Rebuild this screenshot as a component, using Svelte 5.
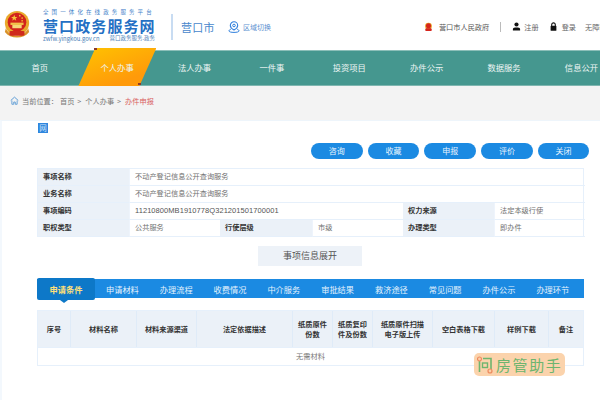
<script>
  const nav = ['首页', '个人办事', '法人办事', '一件事', '投资项目', '办件公示', '数据服务', '信息公开'];
  const actions = ['咨询', '收藏', '申报', '评价', '关闭'];
  const tabs = ['申请材料', '办理流程', '收费情况', '中介服务', '审批结果', '救济途径', '常见问题', '办件公示', '办理环节'];
  const cols = [
    ['序号', 33], ['材料名称', 66], ['材料来源渠道', 60], ['法定依据描述', 96],
    ['纸质原件\n份数', 40], ['纸质复印\n件及份数', 40], ['纸质原件扫描\n电子版上传', 60],
    ['空白表格下载', 62], ['样例下载', 54], ['备注', 34]
  ];
</script>

<div class="page">
  <header class="top">
    <svg class="emblem" viewBox="0 0 30 30" aria-hidden="true">
      <circle cx="15" cy="13.500" r="13" fill="#e9a92c" />
      <circle cx="15" cy="12.500" r="10" fill="#d2231c" />
      <path d="M12 4.500l1 2.400 2.400.1-1.900 1.500.7 2.400-2.200-1.400-2 1.400.6-2.400L8.700 7l2.400-.1z" fill="#f5c63a" />
      <circle cx="18" cy="5.500" r=".9" fill="#f5c63a" />
      <circle cx="20.500" cy="8" r=".9" fill="#f5c63a" />
      <circle cx="20.500" cy="11" r=".9" fill="#f5c63a" />
      <rect x="8" y="13" width="14" height="2.500" fill="#f2c14a" />
      <rect x="10" y="15.500" width="10" height="3.500" fill="#f6d679" />
      <path d="M3 19c3 6 7 8 12 8s9-2 12-8l1 4c-3 4-8 6-13 6S5 27 2 23z" fill="#d9932a" />
      <rect x="7" y="22" width="16" height="5" rx="1.500" fill="#cf2a1d" />
    </svg>
    <div class="brand">
      <div class="slogan">全国一体化在线政务服务平台</div>
      <div class="title">营口政务服务网</div>
      <div class="sub"><span class="url">zwfw.yingkou.gov.cn</span><span>营口政务服务.政务</span></div>
    </div>
    <div class="divider"></div>
    <div class="city">营口市</div>
    <svg class="pin" viewBox="0 0 12 12" aria-hidden="true">
      <path d="M6 .8a3.700 3.700 0 0 1 3.700 3.700C9.700 7 6 9 6 9S2.300 7 2.300 4.500A3.700 3.700 0 0 1 6 .8z" fill="none" stroke="#2f7fdc" stroke-width="1.100" />
      <circle cx="6" cy="4.500" r="1.300" fill="none" stroke="#2f7fdc" stroke-width="1" />
      <path d="M2.800 8.200C1.500 8.700 1 9.300 1 9.900c0 1 2.200 1.500 5 1.500s5-.5 5-1.500c0-.6-.5-1.200-1.800-1.700" fill="none" stroke="#2f7fdc" stroke-width="1" />
    </svg>
    <div class="switch">区域切换</div>
    <div class="links">
      <svg class="mini" viewBox="0 0 10 10" aria-hidden="true">
        <circle cx="5" cy="4" r="3.800" fill="#e8a92c" />
        <circle cx="5" cy="3.700" r="2.800" fill="#d6251d" />
        <rect x="1.500" y="6.500" width="7" height="3" rx="1" fill="#d6251d" />
      </svg>
      <span class="gov">营口市人民政府</span>
      <i class="sep"></i>
      <svg class="glyph" viewBox="0 0 10 10" aria-hidden="true">
        <circle cx="5" cy="2.800" r="2.300" fill="#111" />
        <path d="M1 9.500V7.800C1 6.500 3 6 5 6s4 .5 4 1.800v1.700z" fill="#111" />
      </svg>
      <span class="reg">注册</span>
      <svg class="glyph lock" viewBox="0 0 10 10" aria-hidden="true">
        <path d="M3 4.500V3a2 2 0 0 1 4 0v1.500" fill="none" stroke="#111" stroke-width="1.200" />
        <rect x="1.800" y="4.300" width="6.400" height="5.400" rx=".6" fill="#111" />
      </svg>
      <span class="login">登录</span>
      <span class="access">无障碍</span>
    </div>
  </header>

  <nav class="nav">
    {#each nav as item, i}
      <div class="nav-item" class:active={i === 1}><span>{item}</span></div>
    {/each}
  </nav>

  <div class="crumbs">
    <svg class="home" viewBox="0 0 12 12" aria-hidden="true">
      <path d="M1 6l5-4.500L11 6" fill="none" stroke="#5b9bd5" stroke-width="1.300" />
      <path d="M2.500 6v5h2.500V8h2v3h2.500V6" fill="none" stroke="#5b9bd5" stroke-width="1.200" />
    </svg>
    <span class="here">当前位置：</span>
    <span>首页</span><b>&gt;</b><span>个人办事</span><b>&gt;</b><span class="now">办件申报</span>
  </div>

  <main class="main">
    <div class="net">网</div>
    <div class="actions">
      {#each actions as a}<button>{a}</button>{/each}
    </div>

    <div class="info">
      <div class="l">事项名称</div><div class="v wide">不动产登记信息公开查询服务</div>
      <div class="l">业务名称</div><div class="v wide">不动产登记信息公开查询服务</div>
      <div class="l">事项编码</div><div class="v mid code">11210800MB1910778Q321201501700001</div><div class="l">权力来源</div><div class="v">法定本级行使</div>
      <div class="l">职权类型</div><div class="v">公共服务</div><div class="l">行使层级</div><div class="v">市级</div><div class="l">办理类型</div><div class="v">即办件</div>
    </div>

    <div class="expand-row"><div class="expand">事项信息展开</div></div>

    <div class="tabs">
      <div class="tab-active">申请条件</div>
      {#each tabs as t}<div class="tab">{t}</div>{/each}
    </div>

    <div class="grid">
      <div class="head">
        {#each cols as [c, w]}<div class="th" style="width:{w}px">{c}</div>{/each}
      </div>
      <div class="empty">无需材料</div>
      <div class="mark">
        <svg class="q" viewBox="0 0 16 18" aria-hidden="true">
          <path d="M2.500 3v13M6 2.500h8v13.500h-2" fill="none" stroke="#6fb56e" stroke-width="1.600" />
          <rect x="5.500" y="7" width="5" height="4.500" fill="none" stroke="#6fb56e" stroke-width="1.400" />
          <circle cx="2.500" cy="3" r="2" fill="#fbd0a8" stroke="#ef8a5e" stroke-width="1.200" />
          <circle cx="13" cy="15" r="2" fill="#fbd0a8" stroke="#ef8a5e" stroke-width="1.200" />
        </svg>
        <span>房管助手</span>
      </div>
    </div>
  </main>
</div>

<style>
  :global(body) {
    margin: 0;
    background: #fff;
    overflow: hidden;
  }
  .page {
    width: 600px;
    height: 400px;
    overflow: hidden;
    font-family: "Noto Sans CJK SC", "Liberation Sans", sans-serif;
    font-size: 8px;
    color: #555;
  }

  .top {
    height: 50px;
    display: flex;
    align-items: center;
    box-sizing: border-box;
    padding: 0 0 0 3px;
    white-space: nowrap;
  }
  .emblem { width: 28px; height: 29px; flex: none; margin-bottom: 2px; }
  .brand { margin-left: 12px; width: 112px; color: #2a6fc4; }
  .slogan { font-size: 5.500px; letter-spacing: 3.100px; line-height: 9px; color: #3f7fc9; }
  .title { font-size: 15px; font-weight: 700; letter-spacing: 1.100px; line-height: 17px; color: #2470c4; }
  .sub { display: flex; justify-content: space-between; font-size: 5.500px; line-height: 9px; color: #4d7fb8; }
  .url { font-size: 5.900px; }
  .divider { width: 2px; height: 26px; background: #c8dcf2; margin: 4px 0 0 16px; flex: none; }
  .city { font-size: 11px; margin: 3px 0 0 8px; letter-spacing: .3px; color: #4787cc; }
  .pin { width: 12px; height: 12px; margin: 3px 0 0 13px; flex: none; }
  .switch { font-size: 7px; margin: 3px 0 0 3px; color: #5b8fd0; }
  .links { display: flex; align-items: center; margin-left: 153px; font-size: 7.200px; color: #666; padding-top: 3px; }
  .mini { width: 9px; height: 10px; flex: none; }
  .gov { margin-left: 6px; color: #555; }
  .sep { width: 1px; height: 10px; background: #bbb; margin: 0 11px; flex: none; }
  .glyph { width: 9px; height: 9px; flex: none; }
  .reg { margin-left: 3px; }
  .lock { margin-left: 10px; }
  .login { margin-left: 4px; }
  .access { margin-left: 9px; }

  .nav {
    height: 36px;
    box-sizing: border-box;
    border-top: 1px solid #8cbfb9;
    border-bottom: 1px solid #7fb6b0;
    background: #45978f;
    display: flex;
    padding-left: 1px;
    position: relative;
  }
  .nav-item {
    flex: none;
    width: 77.400px;
    display: flex;
    align-items: center;
    justify-content: center;
    box-sizing: border-box;
    padding-bottom: 2px;
    color: #eef6f5;
    font-size: 8.300px;
    position: relative;
  }
  .nav-item span { position: relative; z-index: 1; }
  .nav-item.active::before {
    content: "";
    position: absolute;
    left: 0;
    top: -3px;
    bottom: -1px;
    width: 78px;
    background: linear-gradient(160deg, #ffc400, #ff9a0a 75%);
    clip-path: polygon(17px 0, 100% 0, 61px 100%, 0 100%);
  }
  .nav-item.active::after {
    content: "";
    position: absolute;
    left: 16px;
    top: -3px;
    width: 61px;
    height: 37px;
    background:
      linear-gradient(#8c3a2a, #8c3a2a) 0 0 / 3px 2px no-repeat,
      linear-gradient(#8c3a2a, #8c3a2a) 44px 35px / 3px 2px no-repeat;
  }

  .crumbs {
    height: 34px;
    background: #f3f3f3;
    display: flex;
    align-items: center;
    padding: 0 0 5px 10px;
    box-sizing: border-box;
    font-size: 7.200px;
    color: #777;
  }
  .home { width: 9px; height: 9px; margin-right: 3px; flex: none; }
  .here { margin-right: 2px; }
  .crumbs b { font-weight: 400; margin: 0 4px 0 3px; }
  .now { color: #d9605e; }

  .main {
    height: 280px;
    box-sizing: border-box;
    background: #fff;
    border-top: 1px solid #eef5fb;
    border-left: 2px solid #f3f8fd;
    padding-left: 35px;
    width: 600px;
  }
  .net {
    width: 10px;
    height: 10px;
    margin: 2px 0 0 1px;
    background: #2f86de;
    color: #cfe4fb;
    font-size: 7.500px;
    line-height: 10px;
    text-align: center;
  }
  .actions {
    display: flex;
    gap: 5px;
    margin: 10px 0 0 274px;
  }
  button {
    width: 51.700px;
    height: 16px;
    padding: 0;
    border: 0;
    border-radius: 8px;
    background: #1b8ae2;
    color: #e8f4fd;
    font: inherit;
    font-size: 8px;
    line-height: 16px;
    flex: none;
  }

  .info {
    width: 547px;
    margin-top: 9px;
    display: grid;
    grid-template-columns: 91px 91px 92px 91px 91px 91px;
    grid-auto-rows: 17px;
    border: 1px solid #e6f0fb;
    box-sizing: border-box;
    line-height: 15px;
    font-size: 7.200px;
    height: 69px;
  }
  .l {
    background: #ebf1f8;
    color: #333;
    font-weight: 700;
    padding-left: 5px;
    border-bottom: 1px solid #e6f0fb;
    box-sizing: border-box;
  }
  .v {
    color: #707070;
    padding-left: 5px;
    border-left: 1px solid #eef4fc;
    border-bottom: 1px solid #e6f0fb;
    box-sizing: border-box;
  }
  .wide { grid-column: span 5; }
  .mid { grid-column: span 3; }
  .code { color: #555; font-size: 7.500px; font-family: "Liberation Sans", sans-serif; letter-spacing: .06px; }

  .expand-row { width: 547px; display: flex; justify-content: center; margin-top: 9px; padding-right: 1px; box-sizing: border-box; }
  .expand {
    width: 104px;
    height: 20px;
    line-height: 20px;
    text-align: center;
    background: #edf2f8;
    color: #555;
    font-size: 9px;
  }

  .tabs {
    width: 547px;
    height: 19px;
    margin-top: 13px;
    background: #1b8ae2;
    display: flex;
    align-items: center;
    position: relative;
    padding-left: 58.500px;
    box-sizing: border-box;
  }
  .tab {
    flex: none;
    width: 53.800px;
    text-align: center;
    color: #e4f2fd;
    font-size: 8.200px;
  }
  .tab-active {
    position: absolute;
    left: 0;
    top: -1px;
    width: 58px;
    height: 22px;
    line-height: 22px;
    background: #0d78c8;
    border-radius: 2px;
    color: #ffe07a;
    font-size: 8.200px;
    font-weight: 700;
    text-align: center;
  }
  .tab-active::after {
    content: "";
    position: absolute;
    left: 23px;
    top: 22px;
    border: 4px solid transparent;
    border-top: 3px solid #0d78c8;
    border-bottom: 0;
  }

  .grid {
    width: 547px;
    margin-top: 12px;
    border: 1px solid #e6f0fb;
    box-sizing: border-box;
    position: relative;
  }
  .head { display: flex; height: 36px; }
  .th {
    flex: none;
    box-sizing: border-box;
    background: #ebf1f8;
    border-right: 1px solid #dfebf8;
    display: flex;
    align-items: center;
    justify-content: center;
    text-align: center;
    white-space: pre-line;
    color: #333;
    font-weight: 700;
    font-size: 7.200px;
    line-height: 10.500px;
  }
  .th:last-child { border-right: 0; }
  .empty {
    height: 18px;
    line-height: 17px;
    text-align: center;
    border-top: 1px solid #e6f0fb;
    color: #777;
    font-size: 7.200px;
    box-sizing: border-box;
  }
  .mark {
    position: absolute;
    left: 436px;
    top: 42px;
    width: 91px;
    height: 23px;
    border-radius: 5px;
    background: #fbd3ac;
    display: flex;
    align-items: center;
    padding-left: 3px;
    box-sizing: border-box;
    color: #6db56f;
    font-size: 15px;
    letter-spacing: 1.600px;
    white-space: nowrap;
  }
  .q { width: 16px; height: 18px; flex: none; margin-right: 3px; }
</style>
